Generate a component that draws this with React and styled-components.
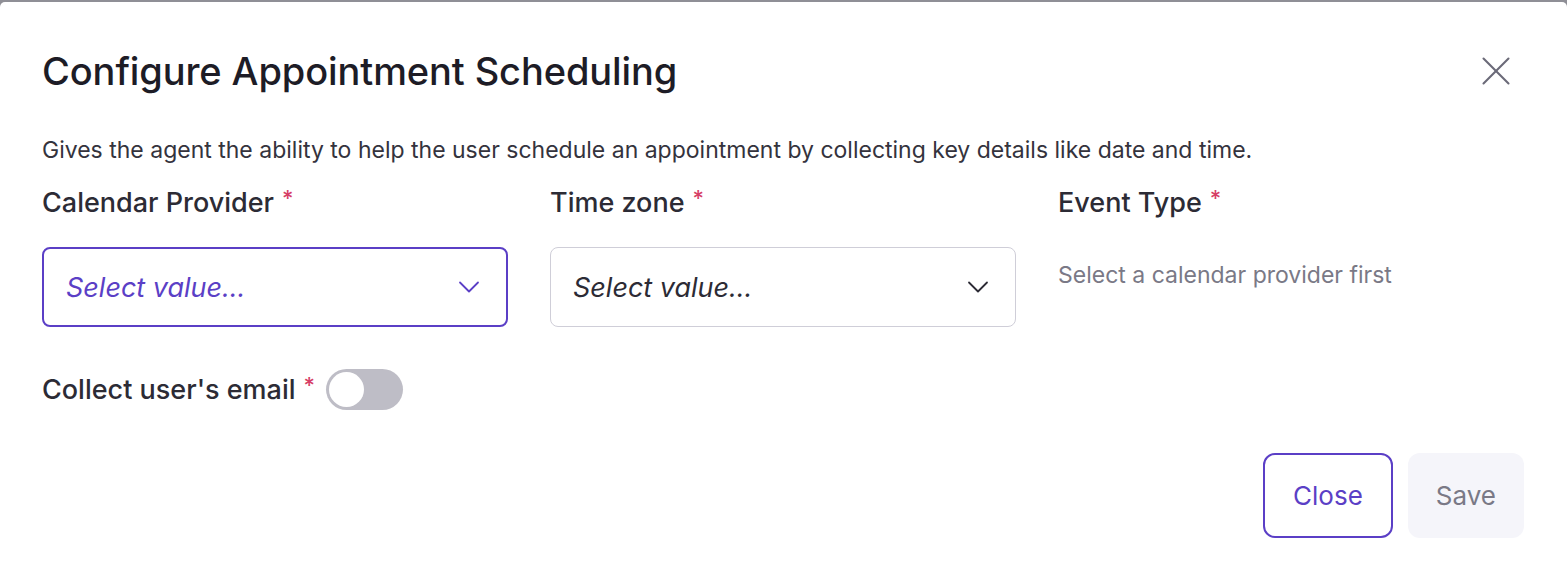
import styled, { createGlobalStyle } from 'styled-components'
import { ChevronDown, X } from 'lucide-react'

const GlobalStyle = createGlobalStyle`
  html, body {
    margin: 0;
    padding: 0;
    background: #8f8f96;
  }
  body {
    font-family: Inter, "Liberation Sans", Arial, sans-serif;
  }
`

const Backdrop = styled.div`
  padding-top: 2px;
  height: 574px;
  box-sizing: border-box;
`

const Modal = styled.div`
  background: #fff;
  height: 572px;
  box-sizing: border-box;
  border-radius: 5px 5px 0 0;
  padding: 46px 43px 0 42px;
  display: flex;
  flex-direction: column;
`

const Header = styled.div`
  display: flex;
  align-items: center;
  justify-content: space-between;
  height: 46px;
`

const Title = styled.h2`
  margin: 0;
  font-size: 38px;
  line-height: 46px;
  font-weight: 500;
  color: #1d1c26;
  letter-spacing: -0.1px;
`

const CloseIcon = styled.button`
  border: none;
  background: none;
  padding: 0;
  margin-right: 3px;
  color: #6b6a78;
  display: flex;
  cursor: pointer;
`

const Description = styled.p`
  margin: 42px 0 0;
  font-size: 23px;
  line-height: 28px;
  color: #34333d;
`

const Fields = styled.div`
  display: grid;
  grid-template-columns: repeat(3, 466px);
  column-gap: 42px;
  margin-top: 23px;
`

const Field = styled.div`
  display: flex;
  flex-direction: column;
`

const Label = styled.label`
  font-size: 27px;
  line-height: 32px;
  font-weight: 500;
  color: #2c2b35;
  display: flex;
  align-items: flex-start;
  gap: 8px;
`

const Required = styled.span`
  color: #d63e66;
  font-size: 22px;
  line-height: 1;
`

const SelectBox = styled.div`
  margin-top: 28px;
  height: 80px;
  box-sizing: border-box;
  border-radius: 8px;
  border: ${p => (p.$focused ? '2px solid #5b3fc6' : '1.5px solid #cfced8')};
  padding: 0 19px 0 22px;
  display: flex;
  align-items: center;
  justify-content: space-between;
  color: ${p => (p.$focused ? '#5b3fc6' : '#2c2b35')};
`

const Placeholder = styled.span`
  font-size: 27px;
  font-style: italic;
`

const Hint = styled.span`
  margin-top: 40px;
  font-size: 23px;
  line-height: 32px;
  color: #7a7986;
`

const ToggleRow = styled.div`
  display: flex;
  align-items: center;
  gap: 11px;
  margin-top: 42px;
`

const Track = styled.div`
  width: 77px;
  height: 41px;
  border-radius: 21px;
  background: #bebdc6;
  box-sizing: border-box;
  padding: 3px;
  display: flex;
  justify-content: ${p => (p.$on ? 'flex-end' : 'flex-start')};
`

const Knob = styled.div`
  width: 35px;
  height: 35px;
  border-radius: 50%;
  background: #fff;
`

const Footer = styled.div`
  display: flex;
  justify-content: flex-end;
  gap: 15px;
  margin-top: 43px;
`

const Button = styled.button`
  height: 85px;
  padding: 0 28px;
  border-radius: 12px;
  font-family: inherit;
  font-size: 26px;
  box-sizing: border-box;
  border: ${p => (p.$outline ? '2px solid #5b3fc6' : 'none')};
  background: ${p => (p.$outline ? '#fff' : '#f5f5fa')};
  color: ${p => (p.$outline ? '#5b3fc6' : '#7a7986')};
`

export default function App() {
  return (
    <>
      <GlobalStyle />
      <Backdrop>
        <Modal>
          <Header>
            <Title>Configure Appointment Scheduling</Title>
            <CloseIcon aria-label="Close">
              <X size={50} strokeWidth={1} />
            </CloseIcon>
          </Header>
          <Description>
            Gives the agent the ability to help the user schedule an appointment by collecting key details like date and time.
          </Description>
          <Fields>
            <Field>
              <Label>Calendar Provider <Required>*</Required></Label>
              <SelectBox $focused>
                <Placeholder>Select value...</Placeholder>
                <ChevronDown size={36} strokeWidth={1.2} />
              </SelectBox>
            </Field>
            <Field>
              <Label>Time zone <Required>*</Required></Label>
              <SelectBox>
                <Placeholder>Select value...</Placeholder>
                <ChevronDown size={36} strokeWidth={1.2} />
              </SelectBox>
            </Field>
            <Field>
              <Label>Event Type <Required>*</Required></Label>
              <Hint>Select a calendar provider first</Hint>
            </Field>
          </Fields>
          <ToggleRow>
            <Label>Collect user's email <Required>*</Required></Label>
            <Track>
              <Knob />
            </Track>
          </ToggleRow>
          <Footer>
            <Button $outline>Close</Button>
            <Button>Save</Button>
          </Footer>
        </Modal>
      </Backdrop>
    </>
  )
}
